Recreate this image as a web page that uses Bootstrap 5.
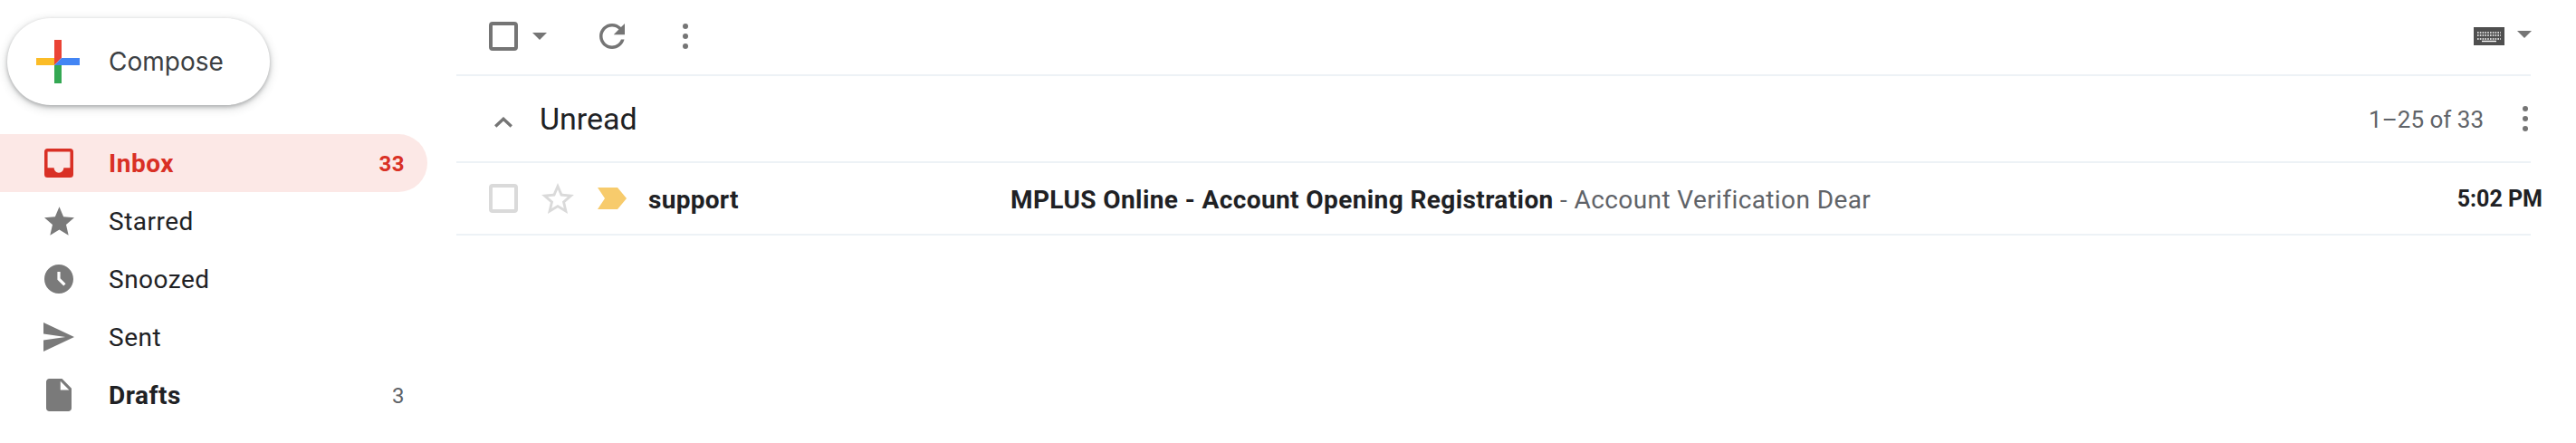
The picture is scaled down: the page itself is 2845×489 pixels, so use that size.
<!DOCTYPE html>
<html lang="en">
<head>
  <meta charset="UTF-8">
  <meta name="viewport" content="width=device-width, initial-scale=1.0">
  <title>Inbox</title>
  <link href="https://cdn.jsdelivr.net/npm/bootstrap@5.3.0/dist/css/bootstrap.min.css" rel="stylesheet">
  <style>
    body {
      font-family: Roboto, "Liberation Sans", sans-serif;
      color: #202124;
      background: #fff;
      overflow: hidden;
    }
    svg { display: block; flex: none; }
    .side-pane { width: 504px; flex: none; padding-top: 20px; }
    .compose-btn {
      width: 290px;
      height: 96px;
      margin: 0 0 32px 8px;
      padding: 0 0 0 32px;
      border: 0;
      border-radius: 48px;
      background: #fff;
      color: #3c4043;
      font-family: Inter, sans-serif;
      font-size: 28px;
      box-shadow: 0 2px 4px rgba(60, 64, 67, .35), 0 3px 10px 2px rgba(60, 64, 67, .15);
    }
    .compose-btn span { margin-left: 32px; }
    .nav-row {
      width: 472px;
      height: 64px;
      padding: 0 25px 0 48px;
      font-size: 28px;
      letter-spacing: .5px;
    }
    .nav-row > span { padding-top: 2px; }
    .nav-row.active-row {
      background: #fce8e6;
      color: #d93025;
      font-weight: 700;
      border-radius: 0 32px 32px 0;
    }
    .nav-ico { width: 34px; margin-right: 38px; flex: none; display: flex; justify-content: center; }
    .nav-count { font-size: 24px; margin-left: auto; }
    .draft-count { color: #5f6368; font-weight: 400; }
    .main-pane { width: 2291px; flex: none; }
    .mail-bar { border-bottom: 2px solid #edf2f6; }
    .tool-row { height: 84px; padding: 0 0 2px 36px; }
    .tick-box { width: 32px; height: 32px; border: 4px solid #757575; border-radius: 4px; flex: none; }
    .tick-box.faint { border-color: #dadada; }
    .section-row { height: 96px; padding: 0 2px 0 42px; font-size: 34px; }
    .section-row .sec-title { margin-left: 30px; }
    .section-arrow { margin-top: 7px; }
    .page-count { color: #5f6368; font-size: 26px; margin-left: auto; margin-right: 42px; padding-top: 2px; }
    .mail-row { height: 80px; padding: 0 0 0 36px; }
    .sender-name { width: 400px; margin-left: 24px; padding-top: 3px; font-size: 28px; font-weight: 700; letter-spacing: .3px; }
    .mail-text { padding-top: 3px; font-size: 28px; letter-spacing: .4px; }
    .mail-snip { color: #5f6368; }
    .mail-time { margin-left: auto; margin-right: -13px; padding-top: 2px; font-size: 25px; font-weight: 700; }
  </style>
</head>
<body>
  <div class="d-flex">
    <div class="side-pane">
      <button class="compose-btn d-flex align-items-center" type="button">
        <svg width="48" height="48" viewBox="0 0 48 48">
          <rect x="20" y="0" width="8" height="20" fill="#ea4335"/>
          <rect x="0" y="20" width="20" height="8" fill="#fbbc27"/>
          <rect x="20" y="28" width="8" height="20" fill="#34a853"/>
          <rect x="28" y="20" width="20" height="8" fill="#4285f4"/>
          <polygon points="20,20 28,20 20,28" fill="#ea4335"/>
          <polygon points="28,20 28,28 20,28" fill="#4285f4"/>
        </svg>
        <span>Compose</span>
      </button>

      <div class="nav-row active-row d-flex align-items-center">
        <div class="nav-ico">
          <svg width="32" height="32" viewBox="3 3 18 18"><path fill="#d93025" d="M19 3H5a2 2 0 0 0-2 2v14a2 2 0 0 0 2 2h14a2 2 0 0 0 2-2V5a2 2 0 0 0-2-2zm0 12h-4c0 1.66-1.35 3-3 3s-3-1.34-3-3H5V5h14v10z"/></svg>
        </div>
        <span>Inbox</span>
        <span class="nav-count">33</span>
      </div>
      <div class="nav-row d-flex align-items-center">
        <div class="nav-ico">
          <svg width="33" height="32" viewBox="2 2 20 19"><path fill="#7a7a7a" d="M12 17.27L18.18 21l-1.64-7.03L22 9.24l-7.19-.61L12 2 9.19 8.63 2 9.24l5.46 4.73L5.82 21z"/></svg>
        </div>
        <span>Starred</span>
      </div>
      <div class="nav-row d-flex align-items-center">
        <div class="nav-ico">
          <svg width="32" height="32" viewBox="2 2 20 20"><path fill="#7a7a7a" d="M11.99 2C6.47 2 2 6.48 2 12s4.47 10 9.99 10C17.52 22 22 17.52 22 12S17.52 2 11.99 2zm3.3 14.71L11 12.41V7h2v4.59l3.71 3.71-1.42 1.41z"/></svg>
        </div>
        <span>Snoozed</span>
      </div>
      <div class="nav-row d-flex align-items-center">
        <div class="nav-ico">
          <svg width="34" height="32" viewBox="2 3 21 18" preserveAspectRatio="none"><path fill="#7a7a7a" d="M2.01 21L23 12 2.01 3 2 10l15 2-15 2z"/></svg>
        </div>
        <span>Sent</span>
      </div>
      <div class="nav-row d-flex align-items-center fw-bold">
        <div class="nav-ico">
          <svg width="28" height="36" viewBox="4 2 16 20" preserveAspectRatio="none"><path fill="#7a7a7a" fill-rule="evenodd" d="M6 2c-1.1 0-2 .9-2 2v16c0 1.1.9 2 2 2h12c1.1 0 2-.9 2-2V8l-6-6H6zM13 9V3.5L18.5 9H13z"/></svg>
        </div>
        <span>Drafts</span>
        <span class="nav-count draft-count">3</span>
      </div>
    </div>

    <div class="main-pane">
      <div class="tool-row mail-bar d-flex align-items-center">
        <span class="tick-box"></span>
        <svg class="ms-3" width="16" height="8" viewBox="0 0 16 8"><polygon points="0,0 16,0 8,8" fill="#757575"/></svg>
        <svg style="margin-left:58px" width="28" height="28" viewBox="4 4 16 16"><path fill="#757575" d="M17.65 6.35C16.2 4.9 14.21 4 12 4c-4.42 0-7.99 3.58-7.99 8s3.57 8 7.99 8c3.73 0 6.84-2.55 7.73-6h-2.08c-.82 2.33-3.04 4-5.65 4-3.31 0-6-2.69-6-6s2.69-6 6-6c1.66 0 3.14.69 4.22 1.78L13 11h7V4l-2.35 2.35z"/></svg>
        <svg style="margin-left:63px" width="8" height="30" viewBox="0 0 8 30"><circle cx="4" cy="4" r="3" fill="#757575"/><circle cx="4" cy="15" r="3" fill="#757575"/><circle cx="4" cy="26" r="3" fill="#757575"/></svg>
        <svg class="ms-auto" width="34" height="20" viewBox="0 0 34 20">
          <rect width="34" height="20" fill="#4f4f4f"/>
          <path d="M4 6h26M4 9h26" stroke="#fff" stroke-width="1.6" stroke-dasharray="1.6 1.2" fill="none"/>
          <path d="M4 13h26" stroke="#fff" stroke-width="1.6" stroke-dasharray="1.6 1.2" fill="none"/>
          <path d="M9 15.5h16" stroke="#fff" stroke-width="1.4"/>
        </svg>
        <svg style="margin:0 -1px 4px 14px" width="16" height="8" viewBox="0 0 16 8"><polygon points="0,0 16,0 8,8" fill="#757575"/></svg>
      </div>

      <div class="section-row mail-bar d-flex align-items-center">
        <svg class="section-arrow" width="20" height="12" viewBox="0 0 20 12"><path d="M1.2 10.5L10 2.3l8.8 8.2" fill="none" stroke="#757575" stroke-width="3.4"/></svg>
        <span class="sec-title">Unread</span>
        <span class="page-count">1–25 of 33</span>
        <svg width="8" height="30" viewBox="0 0 8 30"><circle cx="4" cy="4" r="3" fill="#757575"/><circle cx="4" cy="15" r="3" fill="#757575"/><circle cx="4" cy="26" r="3" fill="#757575"/></svg>
      </div>

      <div class="mail-row mail-bar d-flex align-items-center">
        <span class="tick-box faint"></span>
        <svg style="margin-left:26px" width="36" height="34" viewBox="2 2 20 19"><path fill="#dadada" d="M22 9.24l-7.19-.62L12 2 9.19 8.63 2 9.24l5.46 4.73L5.82 21 12 17.27 18.18 21l-1.63-7.03L22 9.24zM12 15.4l-3.76 2.27 1-4.28-3.32-2.88 4.38-.38L12 6.1l1.71 4.04 4.38.38-3.32 2.88 1 4.28L12 15.4z"/></svg>
        <svg style="margin-left:26px" width="32" height="24" viewBox="0 0 32 24"><polygon points="0,0 22,0 32,12 22,24 0,24 8,12" fill="#f7cb6c"/></svg>
        <span class="sender-name">support</span>
        <span class="mail-text"><strong>MPLUS Online - Account Opening Registration</strong> <span class="mail-snip">- Account Verification Dear</span></span>
        <span class="mail-time">5:02 PM</span>
      </div>
    </div>
  </div>
  <script src="https://cdn.jsdelivr.net/npm/bootstrap@5.3.0/dist/js/bootstrap.bundle.min.js"></script>
</body>
</html>
